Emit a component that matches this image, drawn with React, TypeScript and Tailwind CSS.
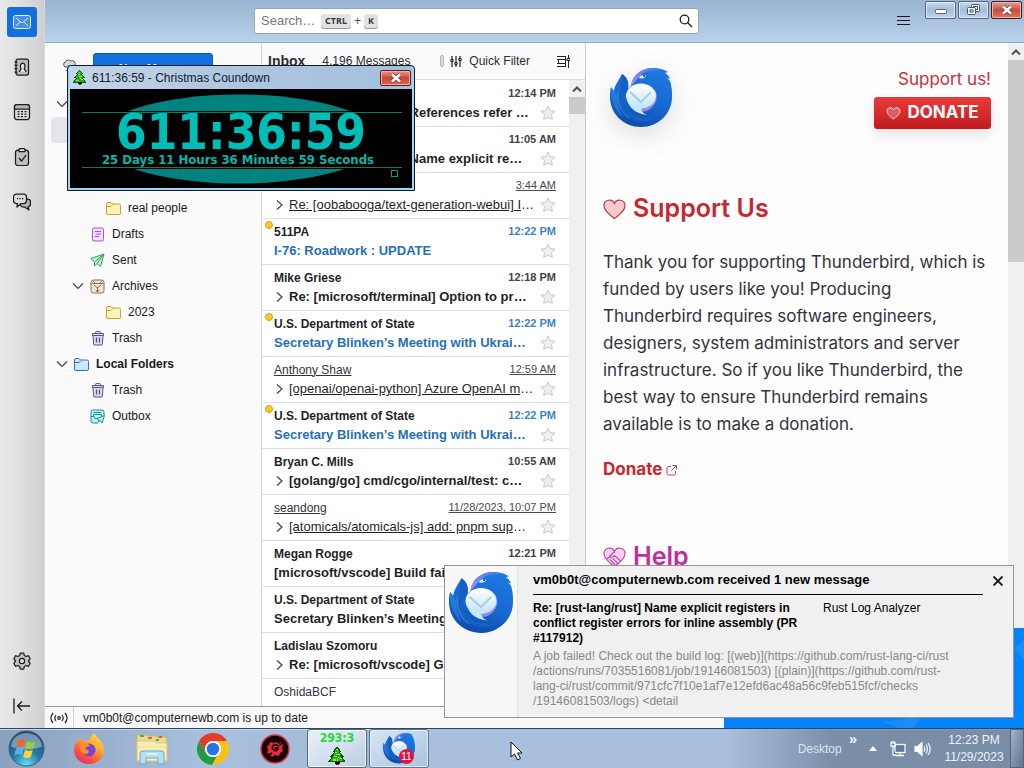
import { useId } from "react";
import type { ReactNode } from "react";

const inboxRows: {
  from: string;
  time: string;
  subject: string;
  thread?: boolean;
  style: "unread" | "new" | "underline" | "read";
  dot?: boolean;
}[] = [
  { from: "", time: "12:14 PM", subject: "Re: [rust-lang/rust] References refer ", thread: true, style: "unread" },
  { from: "", time: "11:05 AM", subject: "Re: [rust-lang/rust] Name explicit re", thread: true, style: "unread" },
  { from: "", time: "3:44 AM", subject: "Re: [oobabooga/text-generation-webui] I", thread: true, style: "underline" },
  { from: "511PA", time: "12:22 PM", subject: "I-76: Roadwork : UPDATE", style: "new", dot: true },
  { from: "Mike Griese", time: "12:18 PM", subject: "Re: [microsoft/terminal] Option to pr", thread: true, style: "unread" },
  { from: "U.S. Department of State", time: "12:22 PM", subject: "Secretary Blinken’s Meeting with Ukrai", style: "new", dot: true },
  { from: "Anthony Shaw", time: "12:59 AM", subject: "[openai/openai-python] Azure OpenAI m", thread: true, style: "underline" },
  { from: "U.S. Department of State", time: "12:22 PM", subject: "Secretary Blinken’s Meeting with Ukrai", style: "new", dot: true },
  { from: "Bryan C. Mills", time: "10:55 AM", subject: "[golang/go] cmd/cgo/internal/test: c", thread: true, style: "unread" },
  { from: "seandong", time: "11/28/2023, 10:07 PM", subject: "[atomicals/atomicals-js] add: pnpm sup", thread: true, style: "underline" },
  { from: "Megan Rogge", time: "12:21 PM", subject: "[microsoft/vscode] Build fai", style: "unread" },
  { from: "U.S. Department of State", time: "", subject: "Secretary Blinken’s Meeting", style: "unread" },
  { from: "Ladislau Szomoru", time: "", subject: "Re: [microsoft/vscode] Git", thread: true, style: "unread" },
  { from: "OshidaBCF", time: "", subject: "[Pulls/Tampermonkey/Repo]", thread: true, style: "read" },
];

function Bird({ className }: { className?: string }) {
  const id = useId();
  return (
    <svg viewBox="0 0 62 60" className={className} aria-hidden="true">
      <defs>
        <linearGradient id={id + "b"} x1="0.7" y1="0" x2="0.4" y2="1">
          <stop offset="0" stopColor="#1c79e0" />
          <stop offset="0.55" stopColor="#1769d2" />
          <stop offset="1" stopColor="#0f4ca8" />
        </linearGradient>
        <linearGradient id={id + "p"} x1="0" y1="1" x2="1" y2="0">
          <stop offset="0" stopColor="#b18af2" />
          <stop offset="1" stopColor="#3f79e8" />
        </linearGradient>
        <linearGradient id={id + "e"} x1="0" y1="0" x2="0" y2="1">
          <stop offset="0" stopColor="#ffffff" />
          <stop offset="1" stopColor="#bfe3fa" />
        </linearGradient>
      </defs>
      <path d="M21 18C22 7 32 0 43 0c6 0 10 1 15 4l-3 1c2 1 4 3 5 6l-3-1c3 2 4 5 4 7 1 4 1 8 1 12 0 17-14 30-31 30S0 46 0 29c0-3 0-6 1-10l3 4C5 16 9 12 12 6c5 3 7 8 6 15Z" fill={`url(#${id}b)`} />
      <path d="M21 18C22 7 32 0 43 0c4 0 7 1 10 2-7 0-13 0-18 2-5 3-8 8-14 14Z" fill={`url(#${id}p)`} />
      <path d="M12 6c5 3 7 8 6 15-2 3-4 6-5 10-3-7-4-15-1-25Z" fill="#1560c4" />
      <path d="M1 20c0 13 4 23 12 29-4-7-6-13-6-21l-3-5Z" fill="#2f8deb" opacity=".55" />
      <path d="M10 23c-2 9 0 18 9 26 8 6 20 6 27 0-11 2-21 0-27-6-5-5-8-11-9-20Z" fill="#1460c6" />
      <path d="M8 24c-1 10 3 20 11 26" fill="none" stroke="#5aa5f3" strokeWidth="1" opacity=".6" />
      <path d="M45 22c4 7 1 15-5 19-4 3-8 3-13 2l8-5Z" fill="#8e8cf0" />
      <path d="M17 29c0 9 8 17 20 18-3-1-5-3-6-6l12-7Z" fill="#c5e6fb" />
      <ellipse cx="31" cy="28" rx="15" ry="12.500" fill={`url(#${id}e)`} />
      <path d="M20 24l11 10 10-10" fill="none" stroke="#a3c9e2" strokeWidth="1.700" />
      <path d="M29 10c1-3 5-4 7-2-1 2-4 3-7 2Z" fill="#e6f3ff" />
      <circle cx="34" cy="8" r="1" fill="#123d8e" />
    </svg>
  );
}

function Tree({ className }: { className?: string }) {
  return (
    <svg viewBox="0 0 16 16" className={className} aria-hidden="true" shapeRendering="crispEdges">
      <path d="M8 0l3 4-1 .5L13 8h-1.500l3.500 5H1l3.500-5H3l3-3.500L5 4Z" fill="#28ac22" stroke="#0a5a0a" />
      <path d="M6 4h2v1H6zM9 6h2v1H9zM5 8h3v1H5zM10 10h2v1h-2zM4 11h3v1H4zM7 2h2v1H7z" fill="#8ff03c" />
      <path d="M7 6h1v1H7zM9 9h1v1H9zM8 11h1v1H8z" fill="#e8e44a" />
      <path d="M6 13h5v2H6z" fill="#1a0a08" />
      <path d="M7 15h3v1H7z" fill="#9b1212" />
    </svg>
  );
}

const folderColors = {
  yellow: ["#fdf3bd", "#c9a227"],
  blue: ["#cfe6ff", "#2276d0"],
};

function FolderIcon({ tone }: { tone: "yellow" | "blue" }) {
  const [fill, stroke] = folderColors[tone];
  return (
    <svg viewBox="0 0 15 13" className="h-[13px] w-[15px]" fill={fill} stroke={stroke} aria-hidden="true">
      <path d="M.5 2A1.500 1.500 0 0 1 2 .5h3L6.500 2H13a1.500 1.500 0 0 1 1.500 1.500V11a1.500 1.500 0 0 1-1.500 1.500H2A1.500 1.500 0 0 1 .5 11Z" />
      <path d="M.5 4.500h4.500L7 2.500" fill="none" />
    </svg>
  );
}

function TrashIcon() {
  return (
    <svg viewBox="0 0 14 15" className="h-[15px] w-[14px]" fill="#dcdcf0" stroke="#55557d" aria-hidden="true">
      <path d="M2 4.500l.6 8.500a1 1 0 0 0 1 1h6.800a1 1 0 0 0 1-1L12 4.500Z" />
      <path d="M1.500 2.500h11v2h-11ZM4.500 2.500v-1a1 1 0 0 1 1-1h3a1 1 0 0 1 1 1v1" />
      <path d="M5.500 6.500v5M8.500 6.500v5" strokeWidth="1.3" />
    </svg>
  );
}

function DraftsIcon() {
  return (
    <svg viewBox="0 0 14 15" className="h-[15px] w-[14px]" fill="#f3ddff" stroke="#a557d8" aria-hidden="true">
      <rect x="1.500" y="1" width="11" height="13" rx="1.500" />
      <path d="M4 4.500h6M5 7h5M4 9.500h4" />
    </svg>
  );
}

function SentIcon() {
  return (
    <svg viewBox="0 0 15 15" className="size-[15px]" fill="#c8f3d8" stroke="#3a9a63" strokeLinejoin="round" aria-hidden="true">
      <path d="M.8 5.500L14 1 10.500 13.500 7 10.500 4.500 13 4.500 9Z" />
      <path d="M4.500 9L14 1 7 10.500" />
    </svg>
  );
}

function ArchiveIcon() {
  return (
    <svg viewBox="0 0 15 15" className="size-[15px]" fill="#efe3d3" stroke="#86705a" aria-hidden="true">
      <rect x="1" y="1" width="13" height="13" rx="2.500" />
      <path d="M1.500 4.500h12M3 2l2 2M12 2l-2 2" />
      <path d="M4 6l3.500 3L11 6M7.500 8v4M6 11l1.500 2L9 11" fill="none" />
    </svg>
  );
}

function OutboxIcon() {
  return (
    <svg viewBox="0 0 15 15" className="size-[15px]" fill="#c5f0ec" stroke="#178f8c" aria-hidden="true">
      <path d="M14 6V3a2 2 0 0 0-2-2H3a2 2 0 0 0-2 2v9a2 2 0 0 0 2 2h5" />
      <path d="M1 7.500h3l1 2h3M3.500 3.500h8M3.500 7V5.500h8V7" fill="none" />
      <path d="M7 9.500l7.500-3-2.500 7.500-1.800-2.500L8.500 13l.2-2.300Z" />
    </svg>
  );
}

function Chevron({ open }: { open: boolean }) {
  return (
    <svg viewBox="0 0 12 12" className="size-3 shrink-0" fill="none" stroke="#3f3f46" strokeWidth="1.2" aria-hidden="true">
      {open ? <path d="M1 3.500l5 5 5-5" /> : <path d="M3 1.500l5 4.500-5 4.500" />}
    </svg>
  );
}

function Star() {
  return (
    <svg viewBox="0 0 16 16" className="size-4" fill="#efeff1" stroke="#cacace" strokeLinejoin="round" aria-hidden="true">
      <path d="M8 1l2.100 4.600 5 .5-3.700 3.400 1 5L8 12l-4.400 2.500 1-5L.9 6.100l5-.5Z" />
    </svg>
  );
}

function Heart({ className, fill, stroke }: { className: string; fill: string; stroke: string }) {
  return (
    <svg viewBox="0 0 24 22" className={className} fill={fill} stroke={stroke} strokeWidth="1.300" aria-hidden="true">
      <path d="M12 20.500C7 16.500 1 12.500 1 7a5.700 5.700 0 0 1 11-2.200A5.700 5.700 0 0 1 23 7c0 5.500-6 9.500-11 13.500Z" />
    </svg>
  );
}

function UpArrow() {
  return (
    <svg viewBox="0 0 10 6" className="h-[6px] w-[10px]" fill="none" stroke="#505050" strokeWidth="2" aria-hidden="true">
      <path d="M1 5.500l4-4 4 4" />
    </svg>
  );
}

function ScrollBar({ arrow, thumb }: { arrow: string; thumb: string }) {
  return (
    <div className="flex w-4 shrink-0 flex-col bg-[#f0f0f0]" aria-hidden="true">
      <div className={`flex items-center justify-center ${arrow}`}>
        <UpArrow />
      </div>
      <div className={`bg-[#cbcbcb] ${thumb}`} />
    </div>
  );
}

function FolderRow({ pad, open, icon, label, bold, selected }: { pad: string; open?: boolean; icon?: ReactNode; label?: string; bold?: boolean; selected?: boolean }) {
  return (
    <li className={`ml-[6px] mr-2 flex h-[26px] items-center rounded-sm ${pad} ${selected ? "bg-[#e3e5e8]" : ""}`}>
      <span className="w-[18px] shrink-0">{open && <Chevron open />}</span>
      <span className="flex w-[15px] shrink-0 justify-center">{icon}</span>
      {label && <a href="#folder" className={`ml-[7px] ${bold ? "font-bold" : ""}`}>{label}</a>}
    </li>
  );
}

function SpaceIcon({ children }: { children: ReactNode }) {
  return (
    <svg viewBox="0 0 18 18" className="size-[18px]" fill="none" stroke="#1c1c1f" strokeWidth="1.250" strokeLinejoin="round" aria-hidden="true">
      {children}
    </svg>
  );
}

function Spaces() {
  return (
    <nav aria-label="Spaces" className="flex w-[45px] shrink-0 flex-col items-center border-r border-[#d8d8d8] bg-linear-to-r from-[#e9e9e9] via-[#dedede] to-[#cfcfcf] pt-[7px] pb-[7px] pr-px">
      <button aria-label="Mail" className="flex size-[30px] items-center justify-center rounded-[3px] bg-[#1270dc]">
        <svg viewBox="0 0 18 14" className="h-[14px] w-[18px]" fill="#4690e4" stroke="#e3f0ff" aria-hidden="true">
          <rect x=".5" y=".5" width="17" height="13" rx="2" />
          <path d="M3 3l6 5 6-5M3 11l4-4M15 11l-4-4" fill="none" />
        </svg>
      </button>
      <button aria-label="Address Book" className="mt-[15px] flex size-[30px] items-center justify-center">
        <SpaceIcon>
          <rect x="3" y="1" width="12.500" height="16" rx="2" fill="#bebec0" />
          <path d="M1.500 4h3M1.500 7.300h3M1.500 10.600h3M1.500 14h3" />
          <path d="M6.500 14c0-2 1.500-2 1.500-3.500C7 9.500 7 5 9.700 5s2.700 4.500 1.600 5.500c0 1.500 1.700 1.500 1.700 3.500" fill="#dedede" />
        </SpaceIcon>
      </button>
      <button aria-label="Calendar" className="mt-[15px] flex size-[30px] items-center justify-center">
        <SpaceIcon>
          <rect x="1.500" y="1.500" width="15" height="15" rx="2.500" fill="#dcdcdc" />
          <path d="M1.500 6V4a2.500 2.500 0 0 1 2.500-2.500h10A2.500 2.500 0 0 1 16.500 4v2Z" fill="#b8b8bb" />
          <path d="M4.500 8.500h2M8 8.500h2M11.500 8.500h2M4.500 11h2M8 11h2M11.500 11h2M4.500 13.500h2M8 13.500h2M11.500 13.500h2" />
        </SpaceIcon>
      </button>
      <button aria-label="Tasks" className="mt-[15px] flex size-[30px] items-center justify-center">
        <SpaceIcon>
          <rect x="2.500" y="2" width="13" height="15.500" rx="2.500" fill="#bebec0" />
          <path d="M6 3.500V2a1.500 1.500 0 0 1 1.500-1.500h3A1.500 1.500 0 0 1 12 2v1.500Z" fill="#e4e4e4" />
          <path d="M6 10l2.500 3L13 7" />
        </SpaceIcon>
      </button>
      <button aria-label="Chat" className="mt-[15px] flex size-[30px] items-center justify-center">
        <SpaceIcon>
          <path d="M12 6h2.500a3 3 0 0 1 3 3v2a3 3 0 0 1-2.500 3l1 3-4.500-3H10a3 3 0 0 1-2.700-2" fill="#b3b3b6" />
          <path d="M3.500 1h7a3 3 0 0 1 3 3v3.500a3 3 0 0 1-3 3H8l-4 3.500.5-3.500h-1a3 3 0 0 1-3-3V4a3 3 0 0 1 3-3Z" fill="#dcdcdc" />
          <path d="M4 5.500h1.300M6.500 5.500h1.300M9 5.500h1.300" />
        </SpaceIcon>
      </button>
      <div className="flex-1" />
      <button aria-label="Settings" className="flex size-[30px] items-center justify-center">
        <SpaceIcon>
          <path d="M7.300 1h3.400l.6 2.500 1.700 1 2.500-.8 1.700 3L15.400 9l1.800 2.300-1.700 3-2.500-.8-1.700 1-.6 2.500H7.300l-.6-2.500-1.700-1-2.500.8-1.700-3L2.600 9 .8 6.700l1.700-3 2.500.8 1.700-1Z" fill="#c4c4c6" />
          <circle cx="9" cy="9" r="2.600" fill="#e4e4e4" />
        </SpaceIcon>
      </button>
      <button aria-label="Collapse" className="mt-[15px] flex size-[30px] items-center justify-center">
        <SpaceIcon>
          <path d="M1 1.500v15M17 9H4M9 4.500L4.500 9 9 13.500" strokeWidth="1.300" />
        </SpaceIcon>
      </button>
    </nav>
  );
}

function TopBar() {
  return (
    <header className="relative flex h-[43px] shrink-0 justify-center border-b border-[#8fa9c4] bg-linear-to-b from-[#98b4d0] to-[#bad2eb]">
      <form role="search" className="mr-[116px] mt-[8px] flex h-[26px] w-[445px] items-center rounded-[3px] border border-[#9aa6b4] bg-white pl-[6px] pr-[5px]">
        <input aria-label="Search" placeholder="Search…" className="w-[60px] bg-transparent text-[13px] outline-none placeholder:text-[#77777c]" />
        <kbd className="h-[14px] rounded-[3px] bg-[#e2e2e4] px-[4px] font-['Noto_Sans',sans-serif] text-[9px] leading-[14px] font-bold text-[#3b3b40] shadow-[0_1px_0_#9a9aa0]">CTRL</kbd>
        <span className="px-[3px] text-[12px] text-[#555]">+</span>
        <kbd className="h-[14px] rounded-[3px] bg-[#e2e2e4] px-[4px] font-['Noto_Sans',sans-serif] text-[9px] leading-[14px] font-bold text-[#3b3b40] shadow-[0_1px_0_#9a9aa0]">K</kbd>
        <button type="button" aria-label="Start search" className="ml-auto">
          <svg viewBox="0 0 14 14" className="size-[14px]" fill="none" stroke="#1b1b1f" strokeWidth="1.300" aria-hidden="true">
            <circle cx="5.500" cy="5.500" r="4.300" />
            <path d="M8.700 8.700L13 13" />
          </svg>
        </button>
      </form>
      <div className="absolute top-px right-[2px] flex gap-[2px]">
        <button aria-label="Application menu" className="mt-[14px] mr-[13px] h-[11px] w-[13px]">
          <svg viewBox="0 0 13 11" className="h-[11px] w-[13px]" stroke="#1b1b1f" aria-hidden="true">
            <path d="M0 1.500h13M0 5.500h13M0 9.500h13" />
          </svg>
        </button>
        <button aria-label="Minimize" className="flex h-[18px] w-[31px] items-center justify-center rounded-[2px] border border-[#52677f] bg-linear-to-b from-[#c5d8ec] via-[#a5bdd6] to-[#bdd6ee] shadow-[inset_0_0_0_1px_#dceafa]">
          <svg viewBox="0 0 12 6" className="mt-[3px] h-[6px] w-[12px]" aria-hidden="true"><rect x=".5" y=".5" width="11" height="4" rx="1" fill="#fff" stroke="#56677c" /></svg>
        </button>
        <button aria-label="Restore" className="flex h-[18px] w-[31px] items-center justify-center rounded-[2px] border border-[#52677f] bg-linear-to-b from-[#c5d8ec] via-[#a5bdd6] to-[#bdd6ee] shadow-[inset_0_0_0_1px_#dceafa]">
          <svg viewBox="0 0 13 12" className="h-[12px] w-[13px]" fill="#f4f8fc" stroke="#48596e" aria-hidden="true"><rect x="4.500" y=".5" width="8" height="7" rx="1" /><rect x="6.500" y="2.500" width="4" height="3" /><rect x=".5" y="3.500" width="8" height="7" rx="1" /><rect x="3" y="6" width="3" height="2" /></svg>
        </button>
        <button aria-label="Close" className="flex h-[18px] w-[31px] items-center justify-center rounded-[2px] border border-[#4d1a1c] bg-linear-to-b from-[#e3a39a] via-[#c74a3d] to-[#d9775f] shadow-[inset_0_0_0_1px_#eeb8ae]">
          <CloseGlyph />
        </button>
      </div>
    </header>
  );
}

function CloseGlyph() {
  return (
    <svg viewBox="0 0 12 10" className="h-[10px] w-[12px]" aria-hidden="true">
      <path d="M2 1.500l8 7M10 1.500l-8 7" stroke="#6d3a3a" strokeWidth="4" />
      <path d="M2 1.500l8 7M10 1.500l-8 7" stroke="#fff" strokeWidth="2.500" />
    </svg>
  );
}

function FolderPane() {
  return (
    <section aria-label="Folders" className="w-[217px] shrink-0 overflow-hidden border-r border-[#d4d4d8] bg-[#fafafa]">
      <div className="flex h-[48px] items-start pt-[10px] pl-[16px]">
        <svg viewBox="0 0 16 16" className="mt-[6px] size-4" fill="#d8d8dc" stroke="#55555c" aria-hidden="true">
          <path d="M4 8a3 3 0 0 1 0-5 4 4 0 0 1 6-1 3 3 0 0 1 4 4c0 2-1 3-3 3M4 8h3M8 6v7M5 11l3 3 3-3" />
        </svg>
        <button className="ml-[16px] h-[30px] w-[120px] rounded-[3px] border border-[#0b5cc0] bg-[#1270dc] pt-px text-[12px] font-bold text-white">+ New Message</button>
      </div>
      <ul className="text-[12px] text-[#18181b]">
        <FolderRow pad="pl-[5px]" open icon={<FolderIcon tone="blue" />} />
        <FolderRow pad="pl-[21px]" open icon={<FolderIcon tone="blue" />} selected />
        <FolderRow pad="pl-[37px]" icon={<FolderIcon tone="yellow" />} />
        <FolderRow pad="pl-[37px]" />
        <FolderRow pad="pl-[37px]" icon={<FolderIcon tone="yellow" />} label="real people" />
        <FolderRow pad="pl-[21px]" icon={<DraftsIcon />} label="Drafts" />
        <FolderRow pad="pl-[21px]" icon={<SentIcon />} label="Sent" />
        <FolderRow pad="pl-[21px]" open icon={<ArchiveIcon />} label="Archives" />
        <FolderRow pad="pl-[37px]" icon={<FolderIcon tone="yellow" />} label="2023" />
        <FolderRow pad="pl-[21px]" icon={<TrashIcon />} label="Trash" />
        <FolderRow pad="pl-[5px]" open icon={<FolderIcon tone="blue" />} label="Local Folders" bold />
        <FolderRow pad="pl-[21px]" icon={<TrashIcon />} label="Trash" />
        <FolderRow pad="pl-[21px]" icon={<OutboxIcon />} label="Outbox" />
      </ul>
    </section>
  );
}

const rowStyles = {
  unread: { from: "font-bold text-[#1f1f29]", time: "font-bold text-[#42424c]", subject: "font-bold text-[#1f1f29]" },
  new: { from: "font-bold text-[#1f1f29]", time: "font-bold text-[#3f83c4]", subject: "font-bold text-[#256fb8]" },
  underline: { from: "text-[#33333d] underline", time: "text-[#4a4a54] underline", subject: "text-[#1f1f29] underline" },
  read: { from: "text-[#33333d]", time: "text-[#4a4a54]", subject: "text-[#1f1f29]" },
};

function MessageList() {
  return (
    <section aria-label="Messages" className="flex w-[324px] shrink-0 flex-col border-r border-[#c8c8cc] bg-white">
      <div className="flex h-[37px] shrink-0 items-center border-b border-[#dcdce0] bg-[#fafafa] pr-[15px] pl-[6px] text-[12px] text-[#2b2b33]">
        <h1 className="text-[14px] font-bold">Inbox</h1>
        <span className="ml-[17px] whitespace-nowrap">4,196 Messages</span>
        <span className="ml-auto h-[12px] w-[4px] rounded-sm border border-[#b4b4b8] bg-[#dcdce0]" />
        <button className="ml-[6px] flex items-center gap-[7px] whitespace-nowrap">
          <svg viewBox="0 0 12 12" className="size-3" fill="none" stroke="#222" strokeWidth="1.200" aria-hidden="true">
            <path d="M2 1v3M2 7v5M6 1v6M6 10v2M10 1v2M10 6v6" />
            <circle cx="2" cy="5.500" r="1.200" /><circle cx="6" cy="8.500" r="1.200" /><circle cx="10" cy="4.500" r="1.200" />
          </svg>
          Quick Filter
        </button>
        <button aria-label="Display options" className="ml-[27px]">
          <svg viewBox="0 0 13 13" className="size-[13px]" fill="none" stroke="#222" aria-hidden="true">
            <path d="M0 1.500h9M0 4.500h8M0 8.500h8M0 11.500h9M1.500 4.500v4M8.500 1v11M11.500 0v3M11.500 6v7M10 3.500h3v2h-3z" />
          </svg>
        </button>
      </div>
      <div className="flex min-h-0 flex-1">
        <ul className="min-w-0 flex-1 overflow-hidden pt-px">
          {inboxRows.map((row, i) => {
            const s = rowStyles[row.style];
            return (
              <li key={i} className="relative h-[46px] border-b border-[#dedee2] pt-[4px] pr-[13px] pl-[12px]">
                {row.dot && <span className="absolute top-[2px] left-[3px] size-2 rounded-full border border-[#dc9a10] bg-[#fbcb2a]" />}
                <div className="flex h-[17px] items-center text-[12px] whitespace-nowrap">
                  <span className={s.from}>{row.from}</span>
                  <time className={`ml-auto text-[11px] ${s.time}`}>{row.time}</time>
                </div>
                <div className="flex h-[22px] items-center text-[13px]">
                  {row.thread && <span className="mr-[3px] flex"><Chevron open={false} /></span>}
                  <span className={`min-w-0 flex-1 overflow-hidden whitespace-nowrap ${s.subject}`}>
                    {row.subject}
                    {row.time === "" || row.subject.endsWith("UPDATE") || row.subject.endsWith("fai") ? null : <span className="inline-block">…</span>}
                  </span>
                  <button aria-label="Star" className="shrink-0"><Star /></button>
                </div>
              </li>
            );
          })}
        </ul>
        <ScrollBar arrow="h-[17px]" thumb="h-[17px]" />
      </div>
    </section>
  );
}

function StartPage() {
  return (
    <article className="min-w-0 flex-1 overflow-hidden bg-[#fdfdfe] px-[17px] font-['Inter','Noto_Sans',sans-serif]">
      <div className="flex justify-between pt-[25px]">
        <Bird className="ml-[7px] h-[60px] w-[62px] drop-shadow-[0_8px_12px_rgba(0,0,0,0.12)]" />
        <div className="flex flex-col items-end">
          <a href="#support" className="text-[17px] leading-[22px] text-[#c5303b]">Support us!</a>
          <a href="#donate" className="mt-[7px] flex h-8 w-[117px] items-center justify-center gap-[6px] rounded-[3px] bg-linear-to-b from-[#ea3a3a] to-[#c11b1f] text-[17px] font-bold text-white shadow-[0_6px_12px_rgba(0,0,0,0.10)]">
            <Heart className="h-[13px] w-[15px]" fill="#e0605f" stroke="#ffffff" />
            DONATE
          </a>
        </div>
      </div>
      <h2 className="mt-[64px] flex h-8 items-center gap-[7px] text-[25px] font-semibold text-[#c5282f]">
        <Heart className="h-[21px] w-[23px]" fill="#fcc9cc" stroke="#a8434b" />
        Support Us
      </h2>
      <p className="mt-[24px] text-[17px] leading-[27px] text-[#33333f]">
        Thank you for supporting Thunderbird, which is funded by users like you! Producing Thunderbird requires software engineers, designers, system administrators and server infrastructure. So if you like Thunderbird, the best way to ensure Thunderbird remains available is to make a donation.
      </p>
      <a href="#donate" className="mt-[19px] flex h-[26px] items-center gap-1 text-[17px] font-bold text-[#c5282f]">
        Donate
        <svg viewBox="0 0 11 11" className="size-[11px]" fill="none" stroke="#b94a50" aria-hidden="true">
          <path d="M5 1.500H2.500a1.500 1.500 0 0 0-1.500 1.500v5.500a1.500 1.500 0 0 0 1.500 1.500H8a1.500 1.500 0 0 0 1.500-1.500V6M6.500.5h4v4M10.500.5L5.500 5.500" />
        </svg>
      </a>
      <h2 className="mt-[58px] flex h-8 items-center gap-[7px] text-[25px] font-semibold text-[#bd2f9d]">
        <svg viewBox="0 0 24 22" className="h-[21px] w-[23px]" fill="#fbd0f2" stroke="#b545a0" strokeWidth="1.200" aria-hidden="true">
          <path d="M12 20.500C7 16.500 1 12.500 1 7a5.700 5.700 0 0 1 11-2.200A5.700 5.700 0 0 1 23 7c0 5.500-6 9.500-11 13.500Z" />
          <path d="M12 5L7 9.500c1 2 3 1.500 5-.5l7 6M10 12l6 6M7 13l6 6M4 12l4-2" fill="none" />
        </svg>
        Help
      </h2>
    </article>
  );
}

function CountdownWindow() {
  return (
    <section aria-label="Christmas Coundown" className="absolute top-[65px] left-[67px] flex h-[126px] w-[348px] flex-col rounded-t-[4px] border border-[#101c2c] bg-[#b4d2ee] px-[2px] pb-[2px] shadow-[inset_0_0_0_1px_#8fd8f5]">
      <div className="flex h-[23px] items-center bg-linear-to-r from-[#c3d5e8] via-[#aec5de] to-[#a5bfdb] pr-[1px] pl-[2px]">
        <Tree className="size-[15px]" />
        <h2 className="ml-[5px] text-[12px] text-[#11202e]">611:36:59 - Christmas Coundown</h2>
        <button aria-label="Close countdown" className="ml-auto flex h-[16px] w-[31px] items-center justify-center rounded-[2px] border border-[#6d1a1c] bg-linear-to-b from-[#e59a8c] via-[#cc4434] to-[#d8694f] shadow-[inset_0_0_0_1px_#eeb0a4]">
          <CloseGlyph />
        </button>
      </div>
      <div className="relative flex min-h-0 flex-1 flex-col items-center overflow-hidden bg-black pt-[24px] font-['DejaVu_Sans_Condensed','DejaVu_Sans',sans-serif] font-bold">
        <svg viewBox="0 0 342 99" preserveAspectRatio="none" className="absolute inset-0 h-full w-full" aria-hidden="true">
          <defs>
            <clipPath id="topCap"><rect x="0" y="0" width="342" height="22" /></clipPath>
            <clipPath id="bottomCap"><rect x="0" y="80" width="342" height="19" /></clipPath>
          </defs>
          <ellipse cx="169" cy="50" rx="142" ry="44.500" fill="#00827f" clipPath="url(#topCap)" />
          <ellipse cx="169" cy="50" rx="142" ry="44.500" fill="#00827f" clipPath="url(#bottomCap)" />
          <path d="M12 23.500h330M12 78.500h330" stroke="#0b7c5b" strokeDasharray="320 40" />
          <rect x="321.500" y="81.500" width="6" height="6" fill="none" stroke="#159684" />
        </svg>
        <div className="relative text-[49px] leading-[40px] text-[#00bdb8]">611:36:59</div>
        <div className="relative mr-[6px] text-[13px] leading-[14px] whitespace-nowrap text-[#12b3a6]">25 Days 11 Hours 36 Minutes 59 Seconds</div>
      </div>
    </section>
  );
}

function Toast() {
  return (
    <aside aria-label="New mail" className="absolute right-[10px] bottom-[50px] flex h-[153px] w-[570px] border border-[#94949a] bg-[#f0f0f0] text-black">
      <div className="w-[73px] shrink-0 border-r border-[#e2e2e4] bg-[#f8f8f8] pt-[6px] pl-[4px]">
        <Bird className="h-[62px] w-[64px]" />
      </div>
      <div className="min-w-0 flex-1 pr-[30px] pl-[15px]">
        <h2 className="h-[29px] border-b border-black pt-[5px] text-[13px] leading-[18px] font-bold">vm0b0t@computernewb.com received 1 new message</h2>
        <div className="mt-[6px] flex text-[12px] leading-[15px]">
          <strong className="w-[290px] shrink-0 pr-[20px]">Re: [rust-lang/rust] Name explicit registers in conflict register errors for inline assembly (PR #117912)</strong>
          <span>Rust Log Analyzer</span>
        </div>
        <p className="mt-[3px] text-[12px] leading-[15px] whitespace-nowrap text-[#88888a]">
          A job failed! Check out the build log: [(web)](https://github.com/rust-lang-ci/rust
          <br />/actions/runs/7035516081/job/19146081503) [(plain)](https://github.com/rust-
          <br />lang-ci/rust/commit/971cfc7f10e1af7e12efd6ac48a56c9feb515fcf/checks
          <br />/19146081503/logs) &lt;detail
        </p>
      </div>
      <button aria-label="Dismiss" className="absolute top-[10px] right-[10px]">
        <svg viewBox="0 0 10 10" className="size-[10px]" stroke="#111" strokeWidth="1.800" aria-hidden="true"><path d="M.5.5l9 9M9.500.5l-9 9" /></svg>
      </button>
    </aside>
  );
}

function Taskbar() {
  return (
    <footer className="flex h-10 shrink-0 items-center border-t border-[#2e4664] bg-linear-to-r from-[#8aa2bf] via-[#a8c0dd] via-20% to-[#8fa4bf] text-[12px] shadow-[inset_0_1px_0_#c5d7ec]">
      <button aria-label="Start" className="ml-[8px] w-[37px]">
        <svg viewBox="0 0 38 38" className="size-[37px]" aria-hidden="true">
          <defs>
            <radialGradient id="orb" cx=".5" cy=".95" r=".9"><stop offset="0" stopColor="#5ee4f5" /><stop offset=".45" stopColor="#2579a8" /><stop offset="1" stopColor="#27496c" /></radialGradient>
          </defs>
          <circle cx="19" cy="19" r="18" fill="url(#orb)" stroke="#3f5f80" />
          <path d="M3 17C4 8 11 3 19 3s15 5 16 14c-10 4-22 4-32 0Z" fill="#c5d9e8" opacity=".5" />
          <path d="M10 11c3-2 6-2 8 0l-1.500 7c-3-2-5-1-8 0Z" fill="#ed6a2b" />
          <path d="M19.500 11.500c3 2 6 2 8.500 0L26 18.500c-3 2-5 1-8 0Z" fill="#9bcf3c" />
          <path d="M8 19.500c3-2 5-2 8 0l-1.500 7c-2-2-5-2-8 0Z" fill="#58b1ea" />
          <path d="M17.500 20c3 2 5 2 8 0L23.500 27.500c-3 2-5 2-8 0Z" fill="#fbd33c" />
        </svg>
      </button>
      <button aria-label="Firefox" className="ml-[28px]">
        <svg viewBox="0 0 32 32" className="size-[32px]" aria-hidden="true">
          <defs>
            <linearGradient id="fox" x1=".85" y1="0" x2=".2" y2="1"><stop offset="0" stopColor="#ffe64a" /><stop offset=".4" stopColor="#ffa22e" /><stop offset=".7" stopColor="#fb5a35" /><stop offset="1" stopColor="#e8207a" /></linearGradient>
          </defs>
          <path d="M5 8c0-2 1-3 2-4 0 2 1 3 4 4l6-1c0-3 2-5 5-7 0 4 7 7 8 13 1 2 1 3 1 5 0 7-7 13-15 13S1 25 1 17c0-4 2-7 4-9Z" fill="url(#fox)" />
          <circle cx="16" cy="17" r="6.500" fill="#7446d4" />
          <path d="M7 12c3-3 7-3 10 1-2 0-4 1-5 3 4 0 6 4 1 5-5 0-7-5-6-9Z" fill="#ff8b2c" />
          <path d="M17 9c5 1 8 5 6 11 3-4 2-9-1-11-2-1-4-1-5 0Z" fill="#ffb52f" />
        </svg>
      </button>
      <button aria-label="File Explorer" className="ml-[30px]">
        <svg viewBox="0 0 34 32" className="h-[32px] w-[34px]" aria-hidden="true">
          <path d="M2 3l1-1h8l2 1h8l1 1h8l2 2v22H2Z" fill="#ead98f" stroke="#c9b465" />
          <path d="M13 5h4M24 4h3" stroke="#d2442f" strokeWidth="1.500" /><path d="M5 3h4M21 7h3" stroke="#3a993f" strokeWidth="1.500" />
          <path d="M2 8h18l1 2h11v18H2Z" fill="#f8eeb4" stroke="#d9c777" />
          <path d="M2 14h30" stroke="#efe09a" />
          <path d="M5 31V21a3 3 0 0 1 3-3h18a3 3 0 0 1 3 3v10h-6v-6H11v6Z" fill="#b5def5" stroke="#62a9d6" />
          <path d="M11 21h12" stroke="#e8f7ff" strokeWidth="1.500" />
        </svg>
      </button>
      <button aria-label="Chrome" className="ml-[28px]">
        <svg viewBox="0 0 32 32" className="size-[32px]" aria-hidden="true">
          <circle cx="16" cy="16" r="16" fill="#fbc116" />
          <path d="M16 0a16 16 0 0 1 13.900 8H16a8 8 0 0 0-6.900 12L2.100 8A16 16 0 0 1 16 0Z" fill="#e33b2e" />
          <path d="M2.100 8l7 12A8 8 0 0 0 16 24c1.500 0 3-.4 4-1.100L15 32A16 16 0 0 1 2.100 8Z" fill="#229a4b" />
          <circle cx="16" cy="16" r="8" fill="#fff" /><circle cx="16" cy="16" r="6.300" fill="#2674e8" />
        </svg>
      </button>
      <button aria-label="Game launcher" className="ml-[31px]">
        <svg viewBox="0 0 30 30" className="size-[30px]" aria-hidden="true">
          <circle cx="15" cy="15" r="14" fill="#160508" stroke="#d6333f" strokeWidth="1.500" />
          <path d="M7 12l2-1 1-3 4 1 2-1 3 2 2-2 2 3-1 3 1 3-3 2-1 3-4-1-3 2-2-3-3-1 1-3Z" fill="#e12c36" />
          <path d="M18 12c-3-3-7 0-5 3s5 1 5-1h-3" fill="none" stroke="#25070a" strokeWidth="1.800" />
          <path d="M7 22l5-3M23 8l-4 4" stroke="#160508" strokeWidth="1.500" />
        </svg>
      </button>
      <button aria-label="Christmas Coundown" className="ml-[17px] flex h-[39px] w-[60px] flex-col items-center rounded-[3px] border border-[#4e6785] bg-linear-to-br from-[#eaf2fa] to-[#bccee2] shadow-[inset_0_0_0_1px_#f3f8fd]">
        <span className="font-['DejaVu_Sans_Condensed','DejaVu_Sans',sans-serif] text-[12px] leading-[16px] font-bold text-[#22d83a]">293:3</span>
        <Tree className="h-[20px] w-[18px]" />
      </button>
      <button aria-label="Thunderbird, 11 unread" className="relative ml-[2px] flex h-[39px] w-[60px] items-center justify-center rounded-[3px] border border-[#5c7796] bg-linear-to-br from-[#d9e6f3] to-[#aac2de] shadow-[inset_0_0_0_1px_#dfebf6]">
        <Bird className="h-[31px] w-[32px]" />
        <span className="absolute top-[19px] left-[29px] flex size-[15px] items-center justify-center rounded-full bg-[#dc1741] text-[10px] text-white">11</span>
      </button>
      <div className="flex h-full flex-1 items-center justify-end bg-linear-to-r from-[#a8c0dd] from-50% to-[#7487a1]/80 to-68% text-[#eef3f9]">
        <span className="text-[#dbe4ef]">Desktop</span>
        <span className="mb-[20px] ml-[7px] text-[15px] leading-[14px] font-bold">»</span>
        <button aria-label="Show hidden icons" className="ml-[12px]">
          <svg viewBox="0 0 8 5" className="h-[5px] w-[8px]" aria-hidden="true"><path d="M4 0l4 5H0Z" fill="#fff" /></svg>
        </button>
        <button aria-label="Network" className="ml-[13px]">
          <svg viewBox="0 0 16 16" className="size-4" fill="#637a96" stroke="#f6f9fc" strokeWidth="1.300" aria-hidden="true">
            <rect x="5" y="3.500" width="10" height="8" /><path d="M6 14.500h8M10 12v2M3 6v8h3M1 1v4h4V1M2 0v3M4 0v3" />
          </svg>
        </button>
        <button aria-label="Volume" className="ml-[8px]">
          <svg viewBox="0 0 17 16" className="h-4 w-[17px]" fill="none" stroke="#f6f9fc" strokeWidth="1.200" aria-hidden="true">
            <path d="M1 5.500h2.500L8 1.500v13l-4.500-4H1Z" fill="#fff" /><path d="M10 5.500c1 1.500 1 3.500 0 5M12 3.500c2 3 2 6 0 9M14 2c3 4 3 8 0 12" />
          </svg>
        </button>
        <time className="ml-[12px] w-[62px] text-center leading-[17px]">12:23 PM<br />11/29/2023</time>
        <button aria-label="Show desktop" className="ml-[5px] h-full w-[14px] border border-[#53677f] bg-linear-to-br from-[#a3b4c8] to-[#5f7490]" />
      </div>
    </footer>
  );
}

export default function App() {
  return (
    <div className="relative flex h-screen flex-col overflow-hidden bg-[#0a84f5] font-['Liberation_Sans',Arial,sans-serif]">
      <div className="flex min-h-0 flex-1">
        <Spaces />
        <div className="flex min-w-0 flex-1 flex-col">
          <TopBar />
          <main className="flex min-h-0 flex-1">
            <FolderPane />
            <MessageList />
            <StartPage />
            <ScrollBar arrow="h-[17px]" thumb="h-[202px]" />
          </main>
          <div className="flex h-[22px] shrink-0 items-center border-t border-[#9b9ba0] bg-[#f9f9fa] text-[12px] text-[#1a1a1e]">
            <span className="flex h-full w-[29px] items-center justify-center border-r border-[#d0d0d4]">
              <svg viewBox="0 0 18 12" className="h-[12px] w-[18px]" fill="none" stroke="#222" strokeWidth="1.200" aria-hidden="true">
                <circle cx="9" cy="6" r="1.300" /><path d="M6 3c-1.500 2-1.500 4 0 6M12 3c1.500 2 1.500 4 0 6M3 1C.5 4 .5 8 3 11M15 1c2.500 3 2.500 7 0 10" />
              </svg>
            </span>
            <span className="pl-[9px]">vm0b0t@computernewb.com is up to date</span>
          </div>
        </div>
      </div>
      <Taskbar />
      <CountdownWindow />
      <div className="absolute right-0 bottom-10 h-[100px] w-[300px] overflow-hidden bg-[#0583fa]" aria-hidden="true">
        <svg viewBox="0 0 300 100" className="h-full w-full"><path d="M290 20l10-8v20ZM158 94l30-4 8 1-6 9h-16Z" fill="#1a8dfb" /></svg>
      </div>
      <Toast />
      <svg viewBox="0 0 14 21" className="absolute bottom-[6px] left-[510px] h-[21px] w-[14px]" aria-hidden="true">
        <path d="M1 1v15l3.500-3 3 6 3-1.500-3-5.500H12Z" fill="#fff" stroke="#111" />
      </svg>
    </div>
  );
}
